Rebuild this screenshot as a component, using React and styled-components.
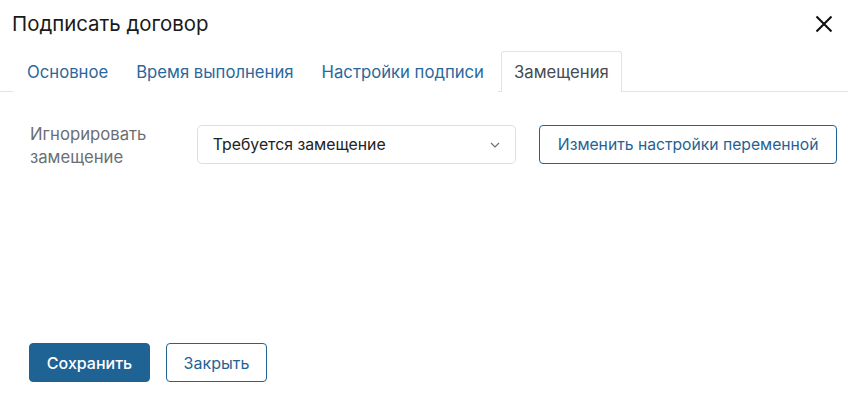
import styled, { createGlobalStyle } from 'styled-components';

const GlobalStyle = createGlobalStyle`
  html, body {
    margin: 0;
    padding: 0;
    background: #fff;
  }
  body {
    font-family: Inter, "Noto Sans", sans-serif;
    color: #222;
  }
  * {
    box-sizing: border-box;
  }
`;

const Dialog = styled.div`
  width: 848px;
  height: 393px;
  display: flex;
  flex-direction: column;
  background: #fff;
`;

const Header = styled.div`
  height: 51px;
  display: flex;
  align-items: center;
  justify-content: space-between;
  padding: 0 14px 4px 12px;
`;

const Title = styled.h1`
  margin: 0;
  font-size: 20.4px;
  font-weight: 400;
  color: #1a1a1a;
`;

const CloseButton = styled.button`
  border: 0;
  background: none;
  padding: 0;
  width: 20px;
  height: 20px;
  display: flex;
  align-items: center;
  justify-content: center;
  cursor: pointer;
`;

const Tabs = styled.div`
  display: flex;
  height: 41px;
  padding-left: 13px;
  border-bottom: 1px solid #e1e3e6;
`;

const Tab = styled.div`
  padding: 0 ${(p) => (p.$active ? 12 : 13)}px;
  margin-left: ${(p) => (p.$active ? 3 : 0)}px;
  display: flex;
  align-items: center;
  font-size: 16.7px;
  white-space: nowrap;
  color: ${(p) => (p.$active ? '#444b52' : '#2a689c')};
  background: #fff;
  border: 1px solid ${(p) => (p.$active ? '#e1e3e6' : 'transparent')};
  border-bottom: 0;
  border-radius: 3px 3px 0 0;
  margin-bottom: -1px;
  cursor: pointer;
`;

const Body = styled.div`
  flex: 1;
  padding: 33px 11px 0 30px;
`;

const Row = styled.div`
  display: flex;
  align-items: flex-start;
`;

const Label = styled.div`
  width: 167px;
  font-size: 16.7px;
  line-height: 23px;
  color: #6b6f73;
  margin-top: -2px;
`;

const Select = styled.div`
  width: 320px;
  height: 39px;
  border: 1px solid #dcdfe2;
  border-radius: 5px;
  display: flex;
  align-items: center;
  justify-content: space-between;
  padding: 0 15px 0 15px;
  font-size: 15.8px;
  color: #222;
`;

const Button = styled.button`
  height: 39px;
  width: ${(p) => p.$width}px;
  padding: 0;
  border-radius: 4px;
  font-family: inherit;
  font-size: 16px;
  white-space: nowrap;
  font-weight: ${(p) => (p.$primary ? 500 : 400)};
  border: 1px solid #1f6394;
  background: ${(p) => (p.$primary ? '#1f6394' : '#fff')};
  color: ${(p) => (p.$primary ? '#fff' : '#1f6394')};
  cursor: pointer;
`;

const SideButton = styled(Button)`
  margin-left: 23px;
  font-size: 15.7px;
`;

const Footer = styled.div`
  display: flex;
  gap: 16px;
  padding: 0 0 11px 29px;
`;

const Chevron = () => (
  <svg width="10" height="6" viewBox="0 0 10 6" fill="none">
    <path d="M1 1l4 4 4-4" stroke="#6b6f73" strokeWidth="1.2" />
  </svg>
);

const CloseIcon = () => (
  <svg width="18" height="18" viewBox="0 0 18 18" fill="none">
    <path d="M1.5 1.5l15 15M16.5 1.5l-15 15" stroke="#111" strokeWidth="2.1" />
  </svg>
);

const tabs = ['Основное', 'Время выполнения', 'Настройки подписи', 'Замещения'];

export default function App() {
  return (
    <Dialog>
      <GlobalStyle />
      <Header>
        <Title>Подписать договор</Title>
        <CloseButton aria-label="Закрыть">
          <CloseIcon />
        </CloseButton>
      </Header>
      <Tabs>
        {tabs.map((t) => (
          <Tab key={t} $active={t === 'Замещения'}>
            {t}
          </Tab>
        ))}
      </Tabs>
      <Body>
        <Row>
          <Label>
            Игнорировать
            <br />
            замещение
          </Label>
          <Select>
            <span>Требуется замещение</span>
            <Chevron />
          </Select>
          <SideButton $width={298}>Изменить настройки переменной</SideButton>
        </Row>
      </Body>
      <Footer>
        <Button $primary $width={121}>Сохранить</Button>
        <Button $width={101}>Закрыть</Button>
      </Footer>
    </Dialog>
  );
}
